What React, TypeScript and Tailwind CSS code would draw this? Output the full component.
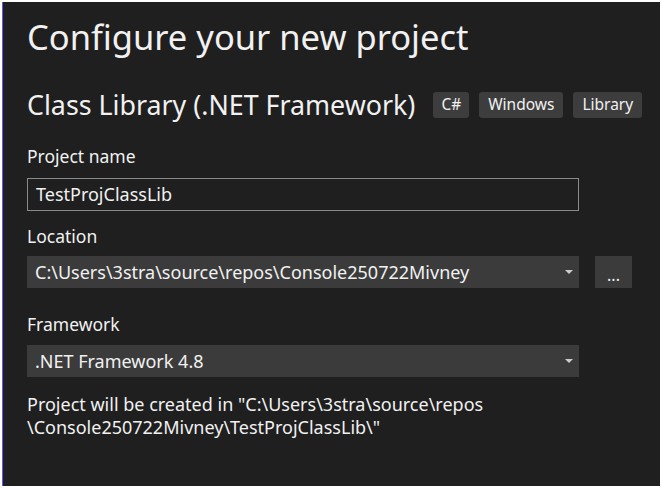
export default function App() {
  return (
    <div className="h-[489px] w-[662px] bg-white pt-[2px] pl-[2px] pr-[2px] pb-[3px] font-['Segoe_UI','Noto_Sans',sans-serif]">
      <div className="h-full border-l border-[#5b5bf5] bg-[#1f1f1f] pl-[24px] text-[#f1f1f1]">
        {/* Heading */}
        <h1 className="pt-[15px] text-[34.5px] leading-[40px]">Configure your new project</h1>

        {/* Template name + tags */}
        <div className="mt-[33px] flex items-center">
          <h2 className="text-[26.8px] leading-[30px]">Class Library (.NET Framework)</h2>
          <div className="ml-[18px] flex gap-[10px] text-[15.5px]">
            <span className="flex h-[26px] items-center rounded-[3px] bg-[#3d3d3d] px-[8px]">C#</span>
            <span className="flex h-[26px] items-center rounded-[3px] bg-[#3d3d3d] px-[9px]">Windows</span>
            <span className="flex h-[26px] items-center rounded-[3px] bg-[#3d3d3d] px-[9px]">Library</span>
          </div>
        </div>

        {/* Project name */}
        <div className="mt-[25px] text-[17.5px] leading-[22px]">Project name</div>
        <div className="mt-[11px] flex h-[33px] w-[552px] items-center border border-[#8b8b8b] pl-[8px] text-[18px]">
          TestProjClassLib
        </div>

        {/* Location */}
        <div className="mt-[14px] text-[17.5px] leading-[22px]">Location</div>
        <div className="mt-[9px] flex items-center gap-[16px]">
          <div className="relative flex h-[32px] w-[552px] items-center bg-[#3b3b3b] pl-[8px] text-[18px]">
            C:\Users\3stra\source\repos\Console250722Mivney
            <span className="absolute right-[6px] top-[14px] h-0 w-0 border-x-[4px] border-t-[4px] border-x-transparent border-t-[#cccccc]" />
          </div>
          <div className="flex h-[32px] w-[37px] items-center justify-center bg-[#3b3b3b] pt-[6px] text-[16px]">...</div>
        </div>

        {/* Framework */}
        <div className="mt-[25px] text-[17.5px] leading-[22px]">Framework</div>
        <div className="relative mt-[10px] flex h-[32px] w-[552px] items-center bg-[#3b3b3b] pl-[8px] text-[18px]">
          .NET Framework 4.8
          <span className="absolute right-[6px] top-[14px] h-0 w-0 border-x-[4px] border-t-[4px] border-x-transparent border-t-[#cccccc]" />
        </div>

        {/* Footer note */}
        <p className="mt-[16px] text-[18px] leading-[23px]">
          Project will be created in "C:\Users\3stra\source\repos
          <br />
          \Console250722Mivney\TestProjClassLib\"
        </p>
      </div>
    </div>
  );
}
